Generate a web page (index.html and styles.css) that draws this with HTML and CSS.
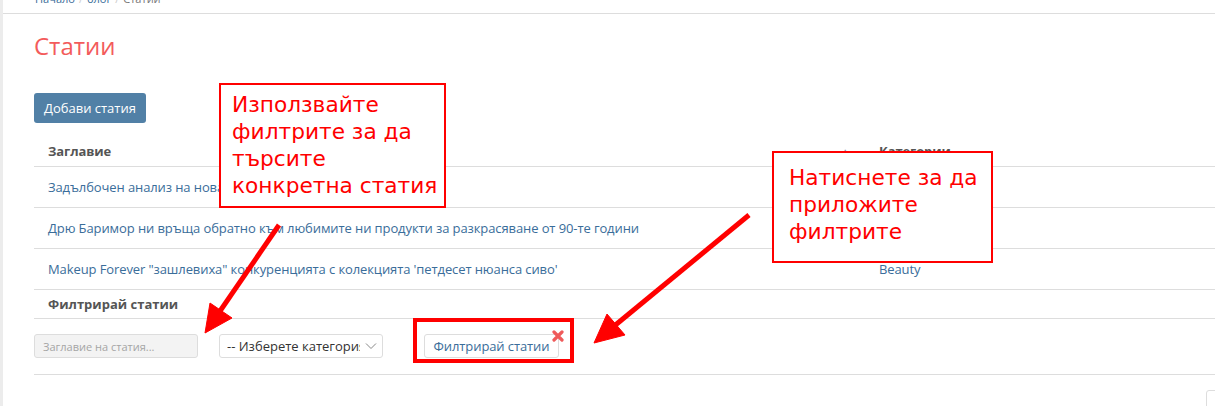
FILE: index.html
```html
<!DOCTYPE html>
<html>
  <head>
    <meta charset="utf-8">
    <title>Статии</title>
    <link rel="stylesheet" href="styles.css">
  </head>
  <body>
    <div class='page'>
      <div class='crumbs'>
        <div class='crumbs-line'>
          <a href='#'>Начало</a><span class='sep'>/</span><a href='#'>блог</a><span class='sep'>/</span><span class='current'>Статии</span>
        </div>
      </div>

      <div class='content'>
        <h1 class='title'>Статии</h1>
        <button class='btn-add'>Добави статия</button>

        <table class='grid'>
          <colgroup>
            <col class='col-title'>
            <col>
          </colgroup>
          <thead>
            <tr>
              <th>Заглавие <span class='sort'>&#9650;</span></th>
              <th>Категории</th>
            </tr>
          </thead>
          <tbody>
            <tr>
              <td><a href='#'>Задълбочен анализ на новата колекция грим за есента</a></td>
              <td><a href='#'>Beauty</a></td>
            </tr>
            <tr>
              <td><a href='#'>Дрю Баримор ни връща обратно към любимите ни продукти за разкрасяване от 90-те години</a></td>
              <td><a href='#'>Beauty</a></td>
            </tr>
            <tr>
              <td><a href='#'>Makeup Forever "зашлевиха" конкуренцията с колекцията 'петдесет нюанса сиво'</a></td>
              <td><a href='#'>Beauty</a></td>
            </tr>
          </tbody>
        </table>

        <div class='filter-head'>Филтрирай статии</div>
        <div class='filter-row'>
          <input class='field' type='text' placeholder='Заглавие на статия...' disabled>
          <span class='select-wrap'>
            <select class='field select'>
              <option>-- Изберете категория --</option>
            </select>
            <svg class='chevron' width='12' height='8' viewBox='0 0 12 8'><path d='M1 1.5 L6 6.5 L11 1.5' fill='none' stroke='#888' stroke-width='1'/></svg>
          </span>
          <span class='btn-wrap'>
            <button class='btn-filter'>Филтрирай статии</button>
            <svg class='clear' width='12' height='12' viewBox='0 0 12 12'><path d='M2 2 L10 10 M10 2 L2 10' stroke='#ef5a5a' stroke-width='3.2' stroke-linecap='round'/></svg>
          </span>
        </div>

        <div class='pager'></div>
      </div>

      <!-- annotations -->
      <svg class='arrows' width='1215' height='406'>
        <g fill='#ff0000' stroke='#ff0000'>
          <line x1='279' y1='225' x2='218' y2='314' stroke-width='5'/>
          <polygon points='205,333 210,303 232,318' stroke-width='1'/>
          <line x1='749' y1='215' x2='613' y2='327' stroke-width='5'/>
          <polygon points='594,343 607,314 625,335' stroke-width='1'/>
        </g>
      </svg>
      <div class='mark'></div>
      <div class='note note-search'>Използвайте<br>филтрите за да<br>търсите<br>конкретна статия</div>
      <div class='note note-apply'>Натиснете за да<br>приложите<br>филтрите</div>
    </div>
  </body>
</html>
```

FILE: styles.css
```css
body {
  margin: 0;
  overflow: hidden;
  background-color: #fff;
  font-family: 'Open Sans', sans-serif;
  font-size: 13px;
  color: #333;
}
a {
  color: #3a6d9a;
  text-decoration: none;
}
.page {
  position: relative;
  height: 406px;
  border-left: 3px solid #ececec;
}
.crumbs {
  height: 13px;
  overflow: hidden;
  border-bottom: 1px solid #ddd;
}
.crumbs-line {
  margin-top: -10px;
  padding-left: 32px;
  font-size: 11px;
  line-height: 18px;
}
.crumbs .sep {
  color: #ccc;
  margin-left: 4px;
  margin-right: 4px;
}
.crumbs .current {
  color: #777;
}
.content {
  padding-left: 31px;
}
.title {
  margin: 17px 0 0 0;
  font-size: 24px;
  line-height: 30px;
  font-weight: normal;
  color: #f35b5b;
}
.btn-add {
  margin-top: 32px;
  padding: 6px 10px;
  border: none;
  border-radius: 3px;
  background-color: #5180a6;
  color: #fff;
  font-family: 'Open Sans', sans-serif;
  font-size: 13px;
  line-height: 18px;
}
.grid {
  margin-top: 11px;
  width: 100%;
  table-layout: fixed;
  border-collapse: collapse;
  letter-spacing: -0.1px;
}
.grid .col-title {
  width: 831px;
}
.grid th, .grid td {
  text-align: left;
  padding: 11px 14px;
  line-height: 18px;
  border-bottom: 1px solid #ddd;
  white-space: nowrap;
  overflow: hidden;
}
.grid th {
  padding-top: 8px;
  padding-bottom: 6px;
  color: #555;
  font-weight: bold;
}
.sort {
  float: right;
  margin-right: 2px;
  color: #7a8aa6;
  font-size: 8px;
}
.filter-head {
  padding: 5px 14px;
  line-height: 18px;
  font-weight: bold;
  color: #555;
  border-bottom: 1px solid #ddd;
}
.filter-row {
  display: flex;
  align-items: center;
  padding: 15px 0 16px 0;
  border-bottom: 1px solid #ddd;
}
.field {
  box-sizing: border-box;
  width: 164px;
  height: 24px;
  border: 1px solid #ddd;
  border-radius: 3px;
  font-family: 'Open Sans', sans-serif;
}
input.field {
  background-color: #f3f3f3;
  padding: 0 8px;
  font-size: 11px;
}
input.field::placeholder {
  color: #a5a5a5;
}
.select-wrap {
  position: relative;
  margin-left: 21px;
}
.select {
  display: block;
  appearance: none;
  -webkit-appearance: none;
  background-color: #fff;
  padding: 0 22px 0 7px;
  font-size: 13px;
  color: #333;
}
.chevron {
  position: absolute;
  right: 6px;
  top: 8px;
}
.btn-wrap {
  position: relative;
  margin-left: 41px;
}
.btn-filter {
  display: block;
  box-sizing: border-box;
  height: 24px;
  width: 135px;
  padding: 0;
  background-color: #fff;
  border: 1px solid #ddd;
  border-radius: 3px;
  color: #3a6d9a;
  font-family: 'Open Sans', sans-serif;
  font-size: 13px;
  letter-spacing: -0.1px;
}
.clear {
  position: absolute;
  left: 128px;
  top: -4px;
}
.pager {
  margin-top: 15px;
  margin-left: 1172px;
  width: 40px;
  height: 30px;
  border: 1px solid #ddd;
  border-radius: 3px;
}
.arrows {
  position: absolute;
  left: -3px;
  top: 0;
  pointer-events: none;
}
.mark {
  position: absolute;
  left: 410px;
  top: 318px;
  width: 153px;
  height: 37px;
  border: 4px solid #ff0000;
}
.note {
  position: absolute;
  box-sizing: border-box;
  background-color: #fff;
  border: 2px solid #ff0000;
  color: #ff0000;
  font-family: 'DejaVu Sans', sans-serif;
  font-size: 21.7px;
  line-height: 27px;
}
.note-search {
  left: 216px;
  top: 83px;
  width: 227px;
  height: 125px;
  padding: 6px 0 0 11px;
}
.note-apply {
  left: 769px;
  top: 151px;
  width: 221px;
  height: 112px;
  padding: 11px 0 0 15px;
}
```
